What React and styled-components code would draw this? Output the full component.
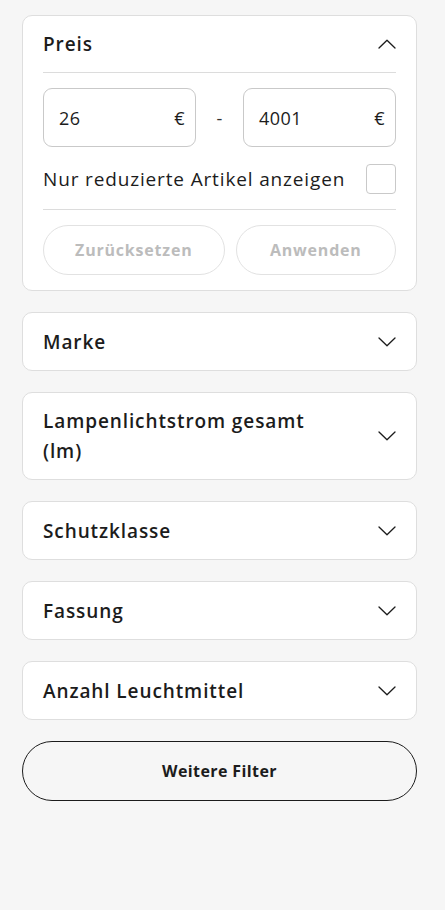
import React from "react";
import styled, { createGlobalStyle } from "styled-components";

const GlobalStyle = createGlobalStyle`
  html, body {
    margin: 0;
    padding: 0;
    background: #f6f6f6;
    font-family: "Open Sans", "Noto Sans", Arial, sans-serif;
    color: #1c1c1c;
  }
`;

const Page = styled.div`
  width: 395px;
  padding: 15px 0 60px 22px;
  display: flex;
  flex-direction: column;
  gap: 21px;
`;

const Card = styled.section`
  background: #fff;
  border: 1px solid #dedede;
  border-radius: 10px;
  padding: 0 20px;
`;

const Header = styled.div`
  display: flex;
  align-items: center;
  justify-content: space-between;
  gap: 30px;
  min-height: ${(p) => (p.open ? "56px" : "57px")};
  padding: ${(p) => (p.tall ? "13px 0" : "0")};
  border-bottom: ${(p) => (p.open ? "1px solid #dcdcdc" : "none")};
`;

const Title = styled.h3`
  margin: 0;
  font-size: 19px;
  font-weight: 600;
  line-height: 30px;
  letter-spacing: 0.9px;
  color: #1c1c1c;
`;

const Body = styled.div`
  padding: 15px 0 15px;
`;

const PriceRow = styled.div`
  display: flex;
  align-items: center;
  justify-content: space-between;
`;

const PriceBox = styled.div`
  width: 153px;
  height: 59px;
  box-sizing: border-box;
  border: 1px solid #c9c9c9;
  border-radius: 9px;
  display: flex;
  align-items: center;
  justify-content: space-between;
  padding: 0 10px 0 15px;
  font-size: 18px;
  letter-spacing: 0.5px;
  color: #1c1c1c;
`;

const Dash = styled.span`
  font-size: 18px;
  color: #333;
`;

const CheckRow = styled.label`
  display: flex;
  align-items: center;
  justify-content: space-between;
  margin-top: 17px;
  padding-bottom: 15px;
  border-bottom: 1px solid #dcdcdc;
  font-size: 19px;
  letter-spacing: 0.85px;
  color: #1c1c1c;
`;

const Box = styled.span`
  width: 28px;
  height: 28px;
  border: 1px solid #c9c9c9;
  border-radius: 4px;
`;

const Actions = styled.div`
  display: flex;
  gap: 11px;
  margin-top: 15px;
`;

const GhostButton = styled.button`
  flex: ${(p) => p.grow};
  height: 50px;
  border: 1px solid #e2e2e2;
  border-radius: 25px;
  background: #fff;
  font-family: inherit;
  font-size: 16px;
  font-weight: 700;
  letter-spacing: 0.8px;
  color: #bcbcbc;
`;

const MoreButton = styled.button`
  height: 60px;
  border: 1px solid #1c1c1c;
  border-radius: 30px;
  background: transparent;
  font-family: inherit;
  font-size: 16px;
  font-weight: 700;
  color: #1c1c1c;
  letter-spacing: 0.4px;
`;

const Chevron = ({ up }) => (
  <svg width="18" height="10" viewBox="0 0 18 10" fill="none" style={{ flexShrink: 0 }}>
    <path
      d={up ? "M1 9L9 1.2L17 9" : "M1 1L9 8.8L17 1"}
      stroke="#1c1c1c"
      strokeWidth="1.3"
      strokeLinecap="round"
      strokeLinejoin="round"
    />
  </svg>
);

const filters = [
  "Marke",
  "Lampenlichtstrom gesamt (lm)",
  "Schutzklasse",
  "Fassung",
  "Anzahl Leuchtmittel",
];

export default function App() {
  return (
    <>
      <GlobalStyle />
      <Page>
        <Card>
          <Header open>
            <Title>Preis</Title>
            <Chevron up />
          </Header>
          <Body>
            <PriceRow>
              <PriceBox>
                <span>26</span>
                <span>€</span>
              </PriceBox>
              <Dash>-</Dash>
              <PriceBox>
                <span>4001</span>
                <span>€</span>
              </PriceBox>
            </PriceRow>
            <CheckRow>
              Nur reduzierte Artikel anzeigen
              <Box />
            </CheckRow>
            <Actions>
              <GhostButton grow="182">Zurücksetzen</GhostButton>
              <GhostButton grow="159">Anwenden</GhostButton>
            </Actions>
          </Body>
        </Card>
        {filters.map((name) => (
          <Card key={name}>
            <Header tall={name.length > 20}>
              <Title>{name}</Title>
              <Chevron />
            </Header>
          </Card>
        ))}
        <MoreButton>Weitere Filter</MoreButton>
      </Page>
    </>
  );
}
